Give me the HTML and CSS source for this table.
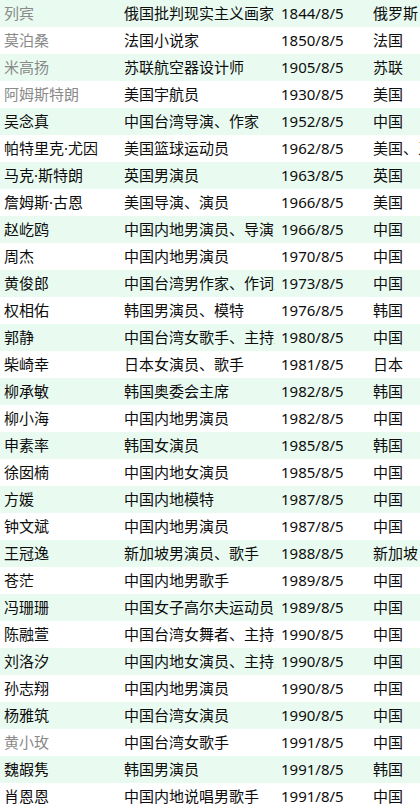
FILE: index.html
```html
<!DOCTYPE html>
<html lang="zh">
<head>
<meta charset="utf-8">
<title>8月5日出生的名人</title>
<link rel="stylesheet" href="styles.css">
</head>
<body>
<div class="frame">
<table class="people">
  <colgroup>
    <col class="c-name"><col class="c-desc"><col class="c-date"><col class="c-country">
  </colgroup>
  <tbody>
    <tr><td class="name muted">列宾</td><td class="desc">俄国批判现实主义画家</td><td class="date">1844/8/5</td><td class="country">俄罗斯</td></tr>
    <tr><td class="name muted">莫泊桑</td><td class="desc">法国小说家</td><td class="date">1850/8/5</td><td class="country">法国</td></tr>
    <tr><td class="name muted">米高扬</td><td class="desc">苏联航空器设计师</td><td class="date">1905/8/5</td><td class="country">苏联</td></tr>
    <tr><td class="name muted">阿姆斯特朗</td><td class="desc">美国宇航员</td><td class="date">1930/8/5</td><td class="country">美国</td></tr>
    <tr><td class="name">吴念真</td><td class="desc">中国台湾导演、作家</td><td class="date">1952/8/5</td><td class="country">中国</td></tr>
    <tr><td class="name">帕特里克·尤因</td><td class="desc">美国篮球运动员</td><td class="date">1962/8/5</td><td class="country">美国、牙买加</td></tr>
    <tr><td class="name">马克·斯特朗</td><td class="desc">英国男演员</td><td class="date">1963/8/5</td><td class="country">英国</td></tr>
    <tr><td class="name">詹姆斯·古恩</td><td class="desc">美国导演、演员</td><td class="date">1966/8/5</td><td class="country">美国</td></tr>
    <tr><td class="name">赵屹鸥</td><td class="desc">中国内地男演员、导演</td><td class="date">1966/8/5</td><td class="country">中国</td></tr>
    <tr><td class="name">周杰</td><td class="desc">中国内地男演员</td><td class="date">1970/8/5</td><td class="country">中国</td></tr>
    <tr><td class="name">黄俊郎</td><td class="desc">中国台湾男作家、作词人</td><td class="date">1973/8/5</td><td class="country">中国</td></tr>
    <tr><td class="name">权相佑</td><td class="desc">韩国男演员、模特</td><td class="date">1976/8/5</td><td class="country">韩国</td></tr>
    <tr><td class="name">郭静</td><td class="desc">中国台湾女歌手、主持人</td><td class="date">1980/8/5</td><td class="country">中国</td></tr>
    <tr><td class="name">柴崎幸</td><td class="desc">日本女演员、歌手</td><td class="date">1981/8/5</td><td class="country">日本</td></tr>
    <tr><td class="name">柳承敏</td><td class="desc">韩国奥委会主席</td><td class="date">1982/8/5</td><td class="country">韩国</td></tr>
    <tr><td class="name">柳小海</td><td class="desc">中国内地男演员</td><td class="date">1982/8/5</td><td class="country">中国</td></tr>
    <tr><td class="name">申素率</td><td class="desc">韩国女演员</td><td class="date">1985/8/5</td><td class="country">韩国</td></tr>
    <tr><td class="name">徐囡楠</td><td class="desc">中国内地女演员</td><td class="date">1985/8/5</td><td class="country">中国</td></tr>
    <tr><td class="name">方媛</td><td class="desc">中国内地模特</td><td class="date">1987/8/5</td><td class="country">中国</td></tr>
    <tr><td class="name">钟文斌</td><td class="desc">中国内地男演员</td><td class="date">1987/8/5</td><td class="country">中国</td></tr>
    <tr><td class="name">王冠逸</td><td class="desc">新加坡男演员、歌手</td><td class="date">1988/8/5</td><td class="country">新加坡</td></tr>
    <tr><td class="name">苍茫</td><td class="desc">中国内地男歌手</td><td class="date">1989/8/5</td><td class="country">中国</td></tr>
    <tr><td class="name">冯珊珊</td><td class="desc">中国女子高尔夫运动员</td><td class="date">1989/8/5</td><td class="country">中国</td></tr>
    <tr><td class="name">陈融萱</td><td class="desc">中国台湾女舞者、主持人</td><td class="date">1990/8/5</td><td class="country">中国</td></tr>
    <tr><td class="name">刘洛汐</td><td class="desc">中国内地女演员、主持人</td><td class="date">1990/8/5</td><td class="country">中国</td></tr>
    <tr><td class="name">孙志翔</td><td class="desc">中国内地男演员</td><td class="date">1990/8/5</td><td class="country">中国</td></tr>
    <tr><td class="name">杨雅筑</td><td class="desc">中国台湾女演员</td><td class="date">1990/8/5</td><td class="country">中国</td></tr>
    <tr><td class="name muted">黄小玫</td><td class="desc">中国台湾女歌手</td><td class="date">1991/8/5</td><td class="country">中国</td></tr>
    <tr><td class="name">魏嘏隽</td><td class="desc">韩国男演员</td><td class="date">1991/8/5</td><td class="country">韩国</td></tr>
    <tr><td class="name">肖恩恩</td><td class="desc">中国内地说唱男歌手</td><td class="date">1991/8/5</td><td class="country">中国</td></tr>
  </tbody>
</table>
</div>
</body>
</html>
```

FILE: styles.css
```css
html, body {
  margin: 0;
  padding: 0;
  background: #ffffff;
}

body {
  font-family: "Noto Sans", "Noto Sans CJK SC", sans-serif;
  font-size: 15px;
  color: #0d0d0d;
}

.frame {
  width: 420px;
  overflow: hidden;
}

.people {
  border-collapse: collapse;
  table-layout: fixed;
  width: 470px;
}

.c-name { width: 120px; }
.c-desc { width: 155px; }
.c-date { width: 92px; }
.c-country { width: 103px; }

.people td {
  height: 27px;
  padding: 0 0 0 4px;
  line-height: 27px;
  white-space: nowrap;
  overflow: hidden;
  text-overflow: clip;
  vertical-align: middle;
}

.people td.date,
.people td.country {
  padding-left: 6px;
}

.people tr:nth-child(odd) td {
  background: #e9fbf0;
}

.people td.muted {
  color: #8a8a8a;
}
```
